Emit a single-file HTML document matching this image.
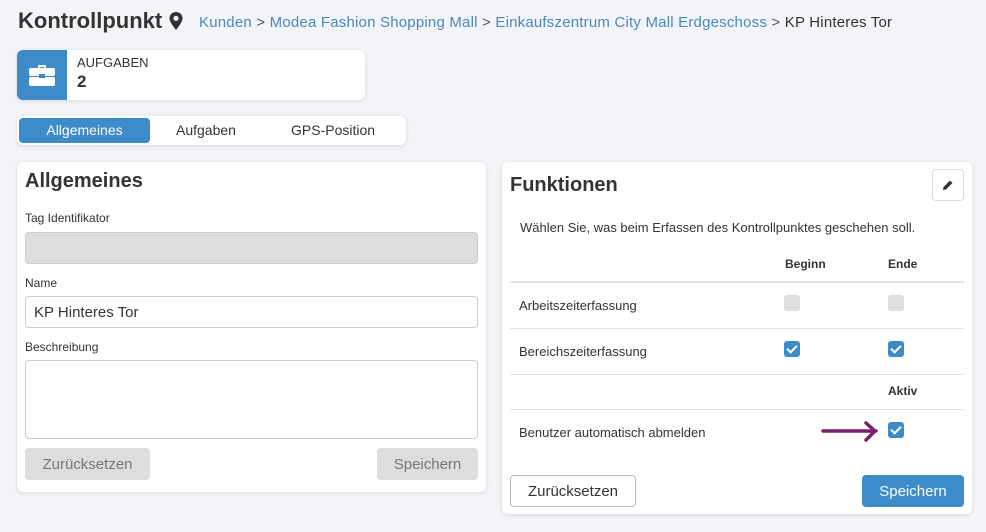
<!DOCTYPE html>
<html><head><meta charset="utf-8"><style>
*{box-sizing:border-box;margin:0;padding:0}
body{width:986px;height:532px;background:#f2f4f7;font-family:"Liberation Sans",Arial,sans-serif;color:#333;position:relative;overflow:hidden}
.a{position:absolute}
.card{position:absolute;background:#fff;border-radius:6px;box-shadow:0 1px 4px rgba(0,0,0,.12)}
.lbl{position:absolute;font-size:12px;color:#333}
.inp{position:absolute;border:1px solid #ccc;border-radius:4px;background:#fff}
.btn{position:absolute;border-radius:4px;font-size:15px;text-align:center;line-height:34px;height:32px}
.cb{position:absolute;width:16px;height:16px;border-radius:3px}
.cb.on{background:#3d8bc9}
.cb.off{background:#e0e0e0}
.cb.on:after{content:"";position:absolute;left:5px;top:2px;width:4px;height:8px;border:solid #fff;border-width:0 2.5px 2.5px 0;transform:rotate(45deg)}
.hl{position:absolute;left:510px;width:454px;height:1px;background:#e3e3e3}
.t13{position:absolute;font-size:13px;color:#333}
.th{position:absolute;font-size:12px;font-weight:bold;color:#333}
</style></head><body>
<div class="a" style="left:18px;top:8px;font-size:22px;font-weight:bold;color:#333">Kontrollpunkt</div>
<svg class="a" style="left:168px;top:11px" width="16" height="20" viewBox="0 0 16 20"><path d="M8 1C4.1 1 1.5 3.8 1.5 7.3 1.5 11.5 8 19 8 19s6.5-7.5 6.5-11.7C14.5 3.8 11.9 1 8 1z" fill="#333"/><circle cx="8" cy="7.3" r="2.6" fill="#f2f4f7"/></svg>
<div class="a" style="left:199px;top:14px;font-size:15px;letter-spacing:0.2px;color:#4a88bd;white-space:nowrap">Kunden <span style="color:#555">&gt;</span> Modea Fashion Shopping Mall <span style="color:#555">&gt;</span> Einkaufszentrum City Mall Erdgeschoss <span style="color:#555">&gt;</span> <span style="color:#333">KP Hinteres Tor</span></div>

<div class="card" style="left:17px;top:50px;width:348px;height:50px;overflow:hidden">
<div class="a" style="left:0;top:0;width:50px;height:50px;background:#3d8bc9"></div>
<svg class="a" style="left:11px;top:12px" width="28" height="25" viewBox="0 0 28 25"><path d="M10 3h8v3h-2V5h-4v1h-2z" fill="#fff"/><rect x="1" y="6" width="26" height="8" rx="2" fill="#fff"/><rect x="1" y="15" width="26" height="9" rx="2" fill="#fff"/><rect x="11" y="12" width="6" height="4" fill="#3d8bc9"/></svg>
<div class="a" style="left:60px;top:5px;font-size:13px;color:#333">AUFGABEN</div>
<div class="a" style="left:60px;top:22px;font-size:17px;font-weight:bold;color:#333">2</div>
</div>

<div class="card" style="left:17px;top:116px;width:389px;height:29px">
<div class="a" style="left:2px;top:2px;width:131px;height:25px;background:#3d8bc9;border-radius:4px;color:#fff;font-size:14px;text-align:center;line-height:25px">Allgemeines</div>
<div class="a" style="left:159px;top:6px;font-size:14px;color:#333">Aufgaben</div>
<div class="a" style="left:274px;top:6px;font-size:14px;color:#333">GPS-Position</div>
</div>

<div class="card" style="left:17px;top:162px;width:469px;height:330px"></div>
<div class="a" style="left:25px;top:170px;font-size:20px;font-weight:bold;color:#333">Allgemeines</div>
<div class="lbl" style="left:25px;top:211px">Tag Identifikator</div>
<div class="inp" style="left:25px;top:232px;width:453px;height:32px;background:#ddd"></div>
<div class="lbl" style="left:25px;top:276px">Name</div>
<div class="inp" style="left:25px;top:296px;width:453px;height:32px;font-size:15px;padding:7px 8px;color:#333">KP Hinteres Tor</div>
<div class="lbl" style="left:25px;top:340px">Beschreibung</div>
<div class="inp" style="left:25px;top:360px;width:453px;height:79px"></div>
<div class="btn" style="left:25px;top:448px;width:125px;background:#ddd;color:#777">Zurücksetzen</div>
<div class="btn" style="left:377px;top:448px;width:101px;background:#ddd;color:#777">Speichern</div>

<div class="card" style="left:502px;top:162px;width:470px;height:352px"></div>
<div class="a" style="left:510px;top:174px;font-size:20px;font-weight:bold;color:#333">Funktionen</div>
<div class="a" style="left:932px;top:169px;width:32px;height:32px;border:1px solid #ddd;border-radius:4px;background:#fff"></div>
<svg class="a" style="left:942px;top:179px" width="12" height="12" viewBox="0 0 12 12"><path d="M1 11l.5-3L8 1.5 10.5 4 4 10.5z" fill="#333"/></svg>
<div class="t13" style="left:520px;top:220px">Wählen Sie, was beim Erfassen des Kontrollpunktes geschehen soll.</div>
<div class="th" style="left:785px;top:257px">Beginn</div>
<div class="th" style="left:888px;top:257px">Ende</div>
<div class="hl" style="top:281px;height:2px"></div>
<div class="t13" style="left:519px;top:298px">Arbeitszeiterfassung</div>
<div class="cb off" style="left:784px;top:295px"></div>
<div class="cb off" style="left:888px;top:295px"></div>
<div class="hl" style="top:328px"></div>
<div class="t13" style="left:519px;top:344px">Bereichszeiterfassung</div>
<div class="cb on" style="left:784px;top:341px"></div>
<div class="cb on" style="left:888px;top:341px"></div>
<div class="hl" style="top:374px"></div>
<div class="th" style="left:888px;top:384px">Aktiv</div>
<div class="hl" style="top:409px"></div>
<div class="t13" style="left:519px;top:425px">Benutzer automatisch abmelden</div>
<svg class="a" style="left:820px;top:420px" width="60" height="24" viewBox="0 0 60 24"><path d="M3 11h53M46 3l9 8-9 9" stroke="#7b1e6e" stroke-width="3.5" fill="none" stroke-linecap="round" stroke-linejoin="round"/></svg>
<div class="cb on" style="left:888px;top:422px"></div>
<div class="btn" style="left:510px;top:475px;width:126px;border:1px solid #bbb;background:#fff;color:#333;line-height:32px">Zurücksetzen</div>
<div class="btn" style="left:862px;top:475px;width:102px;background:#3d8bc9;color:#fff">Speichern</div>
</body></html>
